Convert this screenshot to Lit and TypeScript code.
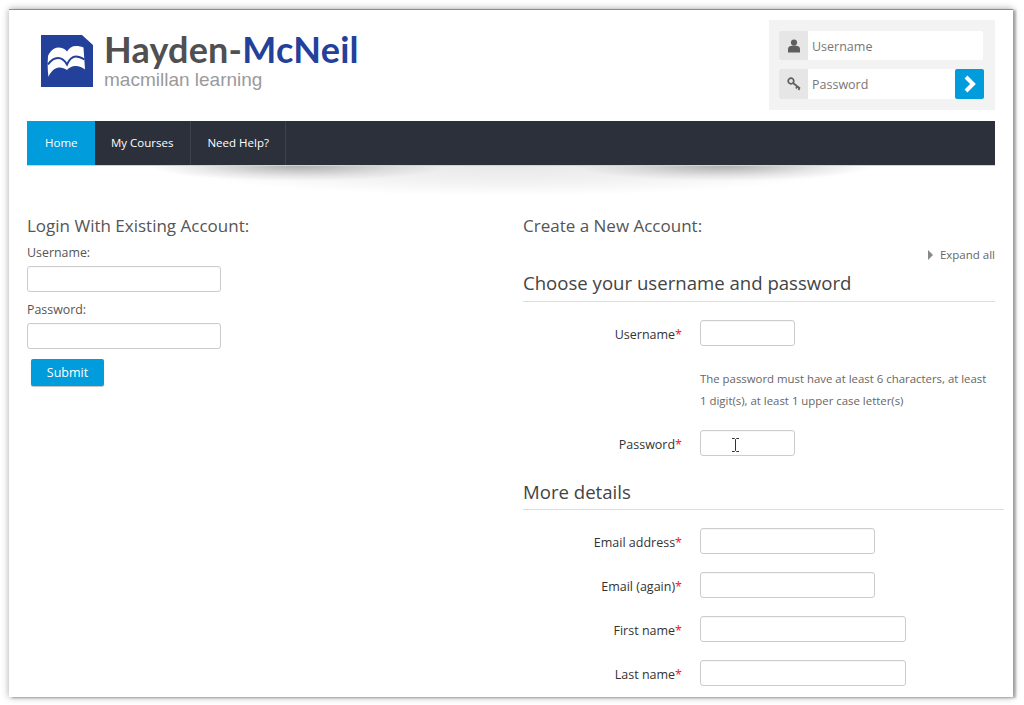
import { LitElement, html, css } from "lit";
import { customElement } from "lit/decorators.js";

const req = (label: string) => html`<label class="flabel">${label}<span class="star">*</span></label>`;

@customElement("app-root")
export class AppRoot extends LitElement {
  static styles = css`
    :host { display: block; width: 1024px; height: 705px; background: #fff; overflow: hidden; font-family: "Open Sans", sans-serif; color: #555; }
    * { box-sizing: border-box; }
    .frame { margin: 9px 0 0 9px; width: 1004px; height: 688px; background: #fff; border-top: 1px solid #3aa6d8; overflow: hidden;
      box-shadow: 0 0 7px rgba(0,0,0,.35), 3px 1px 2px rgba(0,0,0,.25); padding: 0 18px; }
    header { height: 111px; display: flex; justify-content: space-between; }
    .logo { display: flex; margin: 25px 0 0 14px; gap: 11px; align-items: flex-start; }
    .logo svg { flex: none; display: block; }
    .brand { font: 700 36px/40px Lato, sans-serif; color: #505052; margin-top: -6px; white-space: nowrap; letter-spacing: .2px; }
    .brand b { color: #23409a; font-weight: 700; }
    .sub { font: 400 19px/22px "Liberation Sans", sans-serif; color: #9a9a9c; margin-top: 0; }
    .login { width: 226px; height: 90px; margin-top: 10px; background: #f3f3f3; padding: 11px 10px; display: flex; flex-direction: column; gap: 9px; }
    .lrow { display: flex; height: 29px; width: 204px; background: #fff; border-radius: 2px; font-size: 12.5px; color: #777; align-items: center; }
    .lrow + .lrow { height: 30px; }
    .lrow .ic { width: 29px; height: 100%; background: #e6e6e6; display: flex; align-items: center; justify-content: center; border-radius: 2px 0 0 2px; flex: none; }
    .lrow input { border: 0; outline: 0; background: none; padding: 1px 0 0 4px; flex: 1; min-width: 0; height: 100%; font: inherit; }
    .lrow input::placeholder { color: #777; opacity: 1; }
    .go { width: 29px; height: 30px; flex: none; margin-right: -1px; background: #019cdb; border: 0; border-radius: 2px; display: flex; align-items: center; justify-content: center; padding: 0; }
    nav { height: 44px; background: #2b303b; display: flex; font-size: 11.5px; font-weight: 400; color: #fff; }
    nav a { display: flex; align-items: center; padding: 0 16.5px 2px; border-right: 1px solid #3d424d; }
    nav a.on { background: #019cdb; border-right: 0; padding: 0 17px 2px 18px; }
    .shade { height: 40px; border-top: 1px solid #d2d2d2;
      background:
        radial-gradient(ellipse 150px 15px at 270px 0, rgba(0,0,0,.28), rgba(0,0,0,.08) 65%, rgba(0,0,0,0) 100%),
        radial-gradient(ellipse 150px 15px at 698px 0, rgba(0,0,0,.28), rgba(0,0,0,.08) 65%, rgba(0,0,0,0) 100%),
        radial-gradient(ellipse 350px 30px at 484px 0, rgba(0,0,0,.09), rgba(0,0,0,.05) 55%, rgba(0,0,0,0) 100%); }
    main { display: grid; grid-template-columns: 496px 472px; margin-top: 10px; }
    h3 { margin: 0; font-size: 17px; font-weight: 400; line-height: 22px; color: #555; white-space: nowrap; }
    .left label { display: block; font-size: 12.4px; line-height: 18px; color: #555; margin-top: 7px; }
    .left label + input { margin-top: 4px; }
    .left input + label { margin-top: 9px; }
    input.box { display: block; height: 26px; border: 1px solid #ccc; border-radius: 3px; background: #fff; outline: 0; padding: 0 6px; box-shadow: inset 0 1px 1px rgba(0,0,0,.03); }
    .left input.box { width: 194px; }
    .submit { display: block; margin: 10px 0 0 4px; width: 73px; height: 27px; background: #019cdb; color: #fff; border: 0; border-radius: 2px; font: 400 12.5px "Open Sans", sans-serif; box-shadow: 0 1px 1px rgba(0,0,0,.25); padding: 0; }
    .expand { display: flex; justify-content: flex-end; align-items: center; gap: 7px; font-size: 11.5px; line-height: 16px; margin-top: 10px; color: #666; }
    .tri { width: 0; height: 0; border-left: 5px solid #888; border-top: 5px solid transparent; border-bottom: 5px solid transparent; }
    h2 { margin: 7px 0 0; font-size: 18.6px; font-weight: 400; line-height: 26px; color: #444; padding-bottom: 5px; border-bottom: 1px solid #ddd; white-space: nowrap; }
    h2.wide { margin: 23px -9px 0 0; padding-bottom: 4px; }
    .row { display: grid; grid-template-columns: 159px 1fr; column-gap: 18px; align-items: center; margin-top: 18px; }
    .flabel { text-align: right; font-size: 12.5px; font-weight: 500; color: #333; white-space: nowrap; padding-top: 2px; }
    .star { color: #f11; }
    .help { margin: 22px 0 0 177px; font-size: 11.4px; line-height: 22px; color: #666; white-space: nowrap; }
    .s { width: 95px; } .m { width: 175px; } .l { width: 206px; }
    .cursorwrap { position: relative; width: 95px; }
    .cursor { position: absolute; left: 31px; top: 8px; display: block; }
  `;

  render() {
    return html`<div class="frame">
      <header>
        <div class="logo">
          <svg width="52" height="52" viewBox="0 0 52 52">
            <path d="M0 0H41L52 10V52H0Z" fill="#23409a"/>
            <path d="M7 21C9 16 13 13 17 12.5C21 12.5 24 14 26 16.5C28 13 31 11 35 11C38 11 40 11.5 42.5 12.5L44 34.5C41 32 37 30.5 33.5 31C30 31.5 28 33 26 35C23 33 19 32 16 33C12 34 9 38 7.5 42C6.5 35 6.5 28 7 21Z" fill="#fff"/>
            <path d="M7 29.5C10 25 13 23 17 23C21 23 24 26 26 29.5C28 25 31 21.5 35 21.5C38 21.5 41 23 43.5 24.5" fill="none" stroke="#23409a" stroke-width="2"/>
          </svg>
          <div>
            <div class="brand">Hayden-<b>McNeil</b></div>
            <div class="sub">macmillan learning</div>
          </div>
        </div>
        <div class="login">
          <div class="lrow">
            <span class="ic"><svg width="14" height="14" viewBox="0 0 14 14"><circle cx="7" cy="3.6" r="3.1" fill="#5e5e5e"/><path d="M1 13.5V10C1 8 3 6.8 5 6.8H9C11 6.8 13 8 13 10V13.5Z" fill="#5e5e5e"/></svg></span>
            <input placeholder="Username" />
          </div>
          <div class="lrow">
            <span class="ic"><svg width="14" height="14" viewBox="0 0 14 14" fill="none" stroke="#5e5e5e" stroke-width="1.7"><circle cx="4" cy="4" r="2.8"/><path d="M6 6L13 11.5M10.2 9.2L9 11.5M12.5 11L11.5 13"/></svg></span>
            <input placeholder="Password" />
            <button class="go"><svg width="14" height="18" viewBox="0 0 14 18" fill="none" stroke="#fff" stroke-width="4"><path d="M3 2L10 9L3 16"/></svg></button>
          </div>
        </div>
      </header>
      <nav>
        <a class="on">Home</a><a>My Courses</a><a>Need Help?</a>
      </nav>
      <div class="shade"></div>
      <main>
        <section class="left">
          <h3>Login With Existing Account:</h3>
          <label>Username:</label>
          <input class="box" />
          <label>Password:</label>
          <input class="box" type="password" />
          <button class="submit">Submit</button>
        </section>
        <section>
          <h3>Create a New Account:</h3>
          <div class="expand"><span class="tri"></span>Expand all</div>
          <h2>Choose your username and password</h2>
          <div class="row">${req("Username")}<input class="box s" /></div>
          <div class="help">The password must have at least 6 characters, at least<br />1 digit(s), at least 1 upper case letter(s)</div>
          <div class="row">${req("Password")}
            <div class="cursorwrap"><input class="box s" type="password" />
              <svg class="cursor" width="9" height="14" viewBox="0 0 9 14" fill="none" stroke="#333" stroke-width="1"><path d="M1 .5H3.5L4.5 1.5L5.5 .5H8M4.5 1.5V12.5M1 13.5H3.5L4.5 12.5L5.5 13.5H8"/></svg>
            </div>
          </div>
          <h2 class="wide">More details</h2>
          <div class="row">${req("Email address")}<input class="box m" /></div>
          <div class="row">${req("Email (again)")}<input class="box m" /></div>
          <div class="row">${req("First name")}<input class="box l" /></div>
          <div class="row">${req("Last name")}<input class="box l" /></div>
        </section>
      </main>
    </div>`;
  }
}
